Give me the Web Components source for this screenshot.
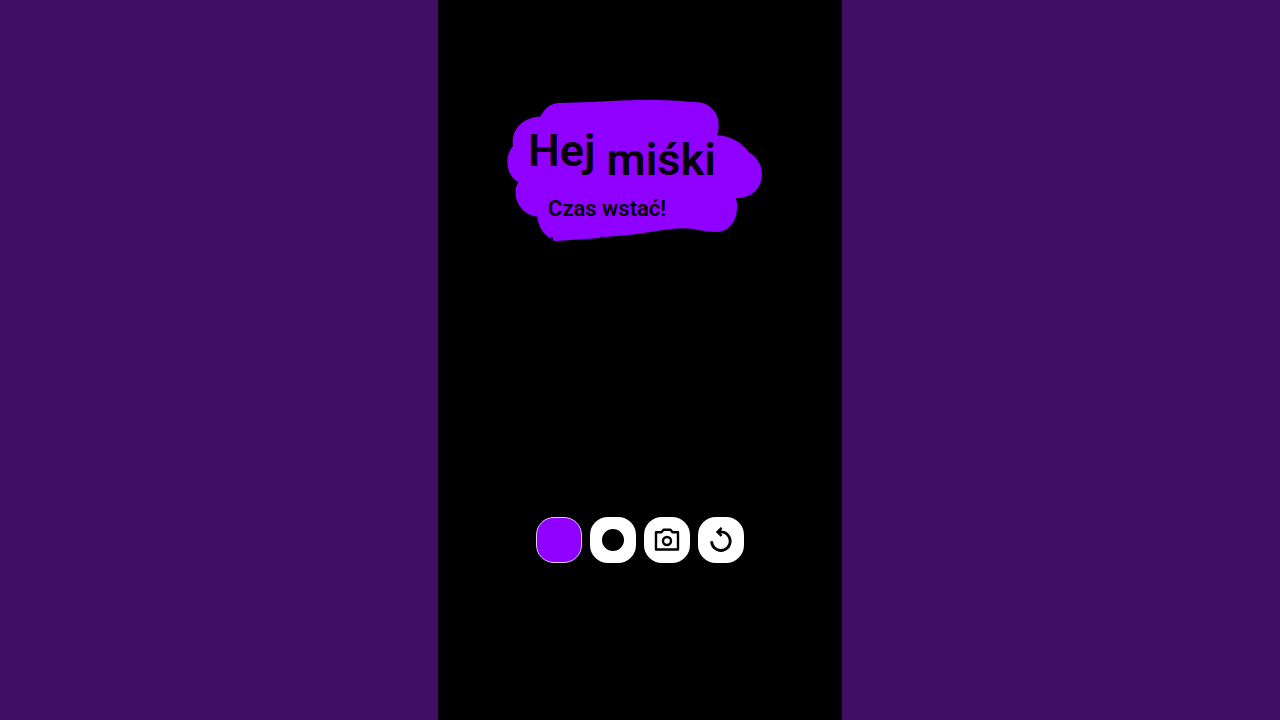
<!DOCTYPE html>
<html lang="pl">
<head>
<meta charset="utf-8">
<meta name="viewport" content="width=device-width, initial-scale=1">
<title>Hej miśki</title>
<style>
html, body { margin: 0; min-height: 100%; }
body { background: #400e64; font-family: Roboto, "Liberation Sans", sans-serif; }
</style>
</head>
<body>
<reveal-app>
  <reveal-note>
    <span slot="first">Hej</span>
    <span slot="second">miśki</span>
    <span slot="message">Czas wstać!</span>
  </reveal-note>
  <tool-bar>
    <tool-button label="Kolor" variant="color"></tool-button>
    <tool-button label="Rozmiar pędzla"><svg viewBox="0 0 32 32"><circle cx="16" cy="16" r="11"/></svg></tool-button>
    <tool-button label="Zrób zdjęcie"><svg viewBox="0 0 32 32"><path fill="none" stroke="#000" stroke-width="2.400" stroke-linejoin="round" d="M5 8.200H10.500L12.500 5.800H19.500L21.500 8.200H27V25.500H5Z"/><circle cx="16" cy="17" r="4" fill="none" stroke="#000" stroke-width="2.400"/></svg></tool-button>
    <tool-button label="Od nowa"><svg viewBox="0 0 32 32"><path fill="none" stroke="#000" stroke-width="2.800" d="M6.600 17.200A9.300 9.300 0 1 0 15.900 7.900H13"/><path d="M10.800 7.900L15.800 3L17.300 4.500L15.200 7.900L17.300 11.300L15.800 12.800Z"/></svg></tool-button>
  </tool-bar>
</reveal-app>
<script>
const define = (name, html) => {
  const template = document.createElement('template');
  template.innerHTML = html;
  customElements.define(name, class extends HTMLElement {
    constructor() {
      super();
      this.attachShadow({ mode: 'open' }).append(template.content.cloneNode(true));
    }
    connectedCallback() {
      const button = this.shadowRoot.querySelector('button');
      if (button) button.setAttribute('aria-label', this.getAttribute('label'));
    }
  });
};

define('reveal-app', `
<style>
:host { display: grid; grid-template-columns: 1fr minmax(0, 404px) 1fr; min-height: 100vh; }
main { grid-column: 2; box-sizing: border-box; padding: 98px 0 157px; background: #000;
  display: flex; flex-direction: column; align-items: center; justify-content: space-between; gap: 32px; }
</style>
<main><slot></slot></main>`);

define('reveal-note', `
<style>
:host { display: block; position: relative; box-sizing: border-box; width: 266px; height: 144px; padding: 27px 0 0 21px; color: #050008; }
svg { position: absolute; inset: 0 auto auto 0; width: 256px; height: 144px; fill: #9000ff; }
h1, p { position: relative; margin: 0; font-weight: 600; white-space: nowrap; }
h1 { display: flex; gap: 11px; font-size: 45px; line-height: 52px; }
.second { padding-top: 9px; }
p { padding: 10px 0 0 20px; font-size: 22px; line-height: 26px; }
</style>
<svg viewBox="51 24 768 432" aria-hidden="true"><path d="M151 80C162 56 181 40 208 39L300 36C365 32 425 29 490 29C540 30 590 34 625 37C661 40 687 70 686 106Q686 121 682 136C721 137 758 160 778 188C800 199 816 225 816 252C816 290 788 324 746 324L737 323C741 333 742 345 741 357C740 392 718 422 687 426C646 428 617 414 572 415C520 418 470 430 415 435L338 442V440H330V444L200 453L190 452V443L187 441V445L183 438V446C160 432 145 410 142 380C106 376 77 346 77 309Q76 290 85 276C65 264 52 243 52 216C52 196 59 180 69 168C61 119 100 80 151 80Z"/></svg>
<h1><slot name="first"></slot><span class="second"><slot name="second"></slot></span></h1>
<p><slot name="message"></slot></p>`);

define('tool-bar', `
<style>
:host { display: flex; gap: 8px; }
</style>
<slot></slot>`);

define('tool-button', `
<style>
:host { display: block; }
button { box-sizing: border-box; display: grid; place-items: center; width: 46px; height: 46px; margin: 0; padding: 0; border: 0; border-radius: 18px; background: #fff; cursor: pointer; }
:host([variant="color"]) button { border: 1px solid #e4c8f8; background: #9000ff; }
::slotted(svg) { display: block; width: 32px; height: 32px; }
</style>
<button type="button"><slot></slot></button>`);
</script>
</body>
</html>
